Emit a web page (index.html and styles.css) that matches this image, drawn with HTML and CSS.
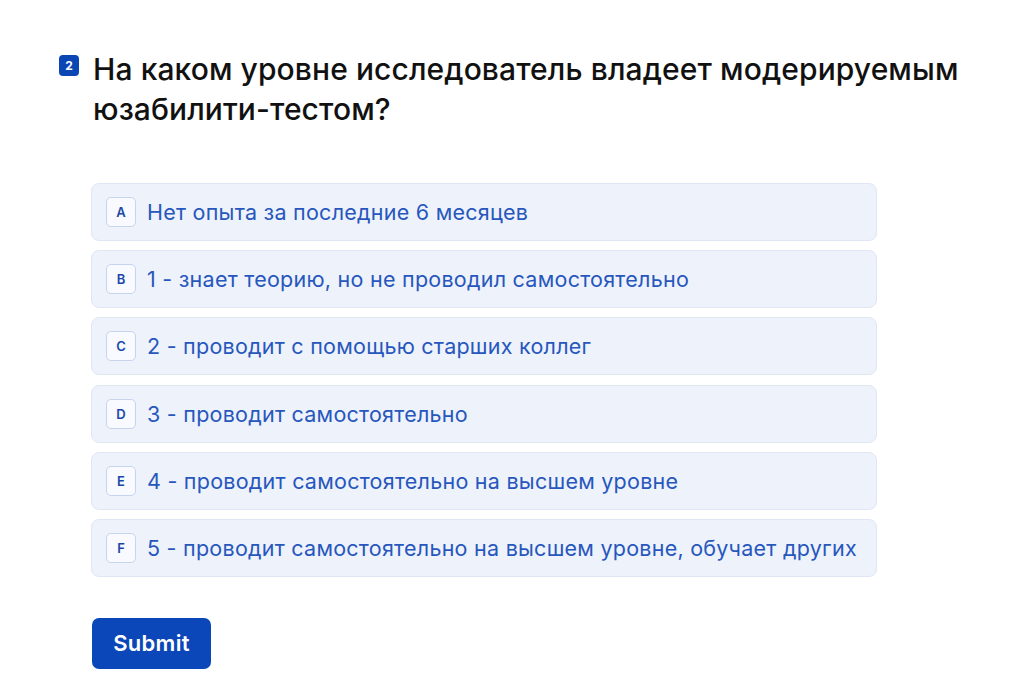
FILE: index.html
```html
<!DOCTYPE html>
<html lang="ru">

<head>
  <meta charset="UTF-8" />
  <meta name="viewport" content="width=device-width, initial-scale=1.0" />
  <title>Вопрос 2</title>
  <link rel="stylesheet" href="styles.css">
</head>

<body>
  <div class="survey">
    <div class="question">
      <span class="qnum">2</span>
      <h1 class="qtitle">На каком уровне исследователь владеет модерируемым юзабилити-тестом?</h1>
    </div>

    <div class="options">
      <label class="option"><span class="key">A</span><span class="otext">Нет опыта за последние 6 месяцев</span></label>
      <label class="option"><span class="key">B</span><span class="otext">1 - знает теорию, но не проводил самостоятельно</span></label>
      <label class="option"><span class="key">C</span><span class="otext">2 - проводит с помощью старших коллег</span></label>
      <label class="option"><span class="key">D</span><span class="otext">3 - проводит самостоятельно</span></label>
      <label class="option"><span class="key">E</span><span class="otext">4 - проводит самостоятельно на высшем уровне</span></label>
      <label class="option"><span class="key">F</span><span class="otext">5 - проводит самостоятельно на высшем уровне, обучает других</span></label>
    </div>

    <button class="submit">Submit</button>
  </div>
</body>

</html>
```

FILE: styles.css
```css
body,
html {
  margin: 0;
  background: #ffffff;
  font-family: Inter, "Noto Sans", sans-serif;
}

.survey {
  padding: 49px 0 0 59px;
}

.question {
  display: flex;
  align-items: flex-start;
  gap: 14px;
}

.qnum {
  flex: none;
  width: 20px;
  height: 21px;
  margin-top: 6px;
  border-radius: 4px;
  background: #0b46b5;
  color: #fff;
  font-size: 12px;
  font-weight: 700;
  display: flex;
  align-items: center;
  justify-content: center;
}

.qtitle {
  margin: 0;
  width: 890px;
  font-size: 30px;
  line-height: 40px;
  font-weight: 500;
  color: #111111;
  letter-spacing: 0.1px;
}

.options {
  margin: 54px 0 0 32px;
  width: 786px;
  display: flex;
  flex-direction: column;
  gap: 9.2px;
}

.option {
  box-sizing: border-box;
  height: 58px;
  display: flex;
  align-items: center;
  gap: 11px;
  padding: 0 14px;
  background: #eef2fb;
  border: 1px solid #dfe6f4;
  border-radius: 8px;
  cursor: pointer;
}

.key {
  flex: none;
  box-sizing: border-box;
  width: 30px;
  height: 30px;
  border: 1px solid #c7d4ee;
  border-radius: 5px;
  background: #f8faff;
  color: #1a48a8;
  font-size: 13px;
  font-weight: 600;
  display: flex;
  align-items: center;
  justify-content: center;
}

.otext {
  font-size: 21.5px;
  letter-spacing: 0.25px;
  color: #2757bd;
}

.submit {
  margin: 41px 0 0 33px;
  width: 119px;
  height: 51px;
  border: none;
  border-radius: 7px;
  background: #0b47b8;
  color: #ffffff;
  font-family: Inter, "Noto Sans", sans-serif;
  font-size: 22px;
  font-weight: 600;
  letter-spacing: 0.3px;
  cursor: pointer;
}
```
